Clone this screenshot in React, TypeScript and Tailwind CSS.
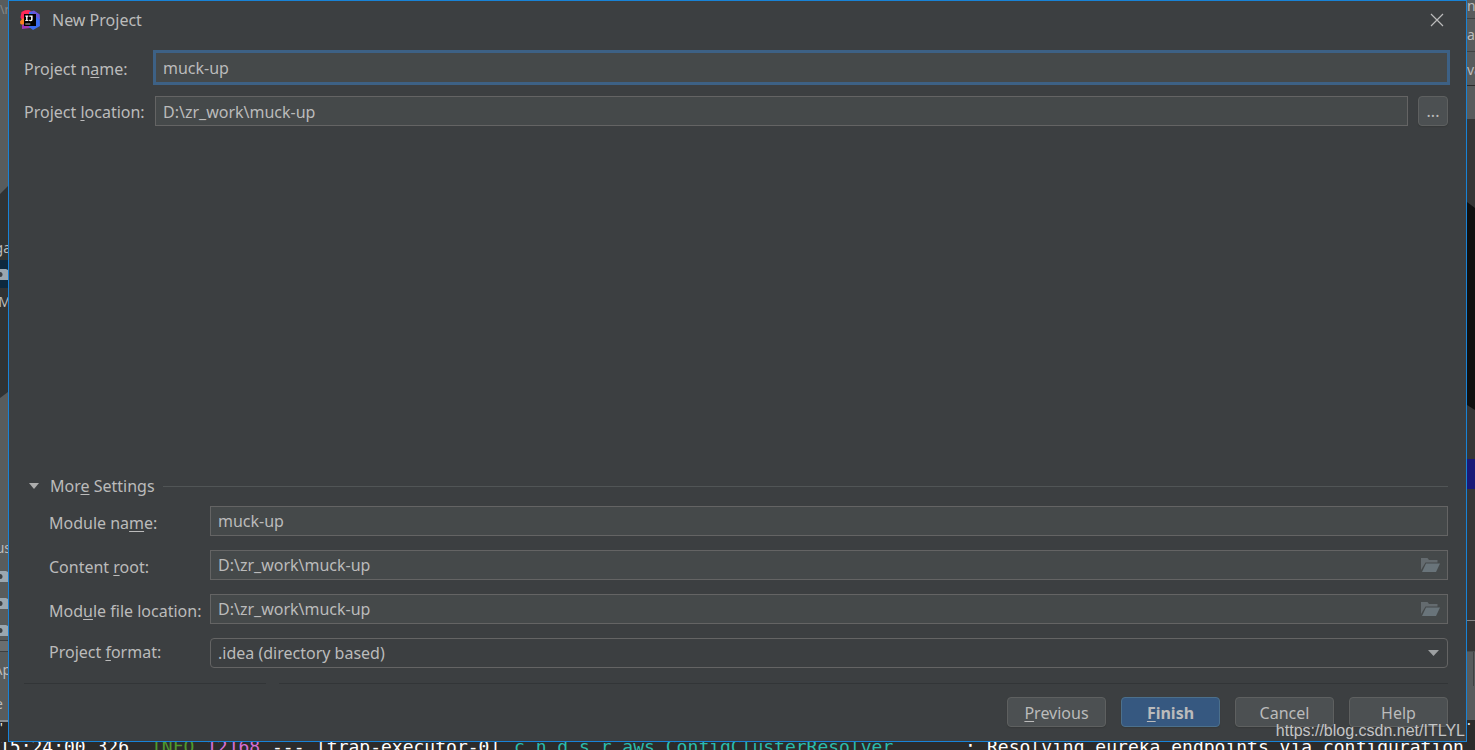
import { useState } from "react";
import type { ReactNode } from "react";

const fieldClass =
  "h-[30px] w-full min-w-0 border border-[#646464] bg-[#45494a] px-[7px] text-[#bbbbbb] outline-none";

const buttonClass =
  "h-[30px] w-[99px] rounded-[4px] border border-[#5e6060] bg-[#4c5052] pt-px shadow-[0_1px_1px_#36393a]";

function Mnemonic({ children }: { children: ReactNode }) {
  return <span className="underline decoration-1 underline-offset-2">{children}</span>;
}

function IdeaLogo() {
  return (
    <svg className="size-5 shrink-0" viewBox="0 0 20 20" aria-hidden="true">
      <path d="M1.500 2 5 .3 9 0l3 2-5 6-5 2-1.500-2.500z" fill="#fe2857" />
      <path d="M0 11.500 3 8l4 5-4 2-2.600-1z" fill="#fc801d" />
      <path d="M2 15l4-2 8 4-4 1-8 1z" fill="#a135b5" />
      <path d="M9 2l5-1 5.500 3.500L20 16l-7 4-4-3z" fill="#3a6cf0" />
      <path d="M11 1.500l3-1 5.500 4 .3 5L15 6z" fill="#6a55d6" />
      <path d="M4 4h12v12H4z" fill="#000" />
      <path
        d="M5.300 5.500h3v1.200h-.8v3.200h.8v1.200h-3V9.900h.8V6.700h-.8zM9.300 5.500h3.300v3.700c0 1.300-.7 2-1.900 2-.8 0-1.400-.3-1.800-.8l.9-.9c.2.300.4.400.7.400.4 0 .6-.2.600-.8V6.700H9.300z"
        fill="#fff"
      />
      <path d="M5.300 13.500h5v1h-5z" fill="#bbb" />
    </svg>
  );
}

function OpenFolder() {
  return (
    <svg className="h-[14px] w-[19px]" viewBox="0 0 19 14" aria-hidden="true">
      <path d="M0 13V0h6.500l1.500 2h8.500v2.500H4.500L0 12z" fill="#646b6f" />
      <path d="M5 5.500h14L15 14H1z" fill="#69747a" />
    </svg>
  );
}

function TreeFolder() {
  return (
    <svg className="block h-[11px] w-2 shrink-0" viewBox="0 0 8 11" aria-hidden="true">
      <path d="M0 0h6l2 1v10H0z" fill="#9aa7b0" />
      <circle cx="0" cy="5.500" r="2.500" fill="#3c4145" />
    </svg>
  );
}

function Clip({ className, children }: { className: string; children: ReactNode }) {
  return (
    <div className={`flex items-center justify-end overflow-hidden text-sm ${className}`}>
      <span className="-mr-[3px]">{children}</span>
    </div>
  );
}

function LeftStrip() {
  return (
    <div className="flex w-2 shrink-0 flex-col overflow-hidden bg-[#585c5d] text-base leading-5 text-[#bbbbbb]">
      <div className="h-[22px] text-xs leading-5 text-[#888]">\r</div>
      <div className="h-[164px]" />
      <svg className="h-2 w-2" viewBox="0 0 8 8" aria-hidden="true">
        <path d="M8 0v8H0z" fill="#303334" />
      </svg>
      <div className="h-[42px] bg-[#303334]" />
      <Clip className="h-[24px] bg-[#303334]">ga</Clip>
      <div className="flex h-[28px] items-center bg-[#0d293e]">
        <TreeFolder />
      </div>
      <Clip className="h-[28px] bg-[#303334]">M</Clip>
      <div className="h-[76px] bg-[#303334]" />
      <svg className="h-[6px] w-2" viewBox="0 0 8 6" aria-hidden="true">
        <path d="M0 0h8L0 6z" fill="#303334" />
      </svg>
      <div className="flex-1" />
      <Clip className="h-[24px]">us</Clip>
      <div className="flex h-[80px] flex-col gap-4 pt-[11px]">
        <TreeFolder />
        <TreeFolder />
        <TreeFolder />
      </div>
      <div className="h-[12px] border-y border-[#3c3f41] bg-[#6a6e70]" />
      <Clip className="h-[36px]">Ap</Clip>
      <div className="h-[32px] text-sm leading-8">
        <span className="-ml-[5px]">e</span>
      </div>
      <div className="h-[2px] bg-[#8a8f93]" />
      <div className="h-5 bg-[#2b2b2b] text-xs leading-3 text-white">'</div>
    </div>
  );
}

function RightStrip() {
  return (
    <div className="flex w-2 shrink-0 flex-col overflow-hidden bg-[#363636] text-sm leading-5 text-[#bbbbbb]">
      <div className="h-[19px] overflow-hidden border-b border-[#3f4243] bg-[#585c5d] leading-3">n</div>
      <div className="h-[33px] border-b border-[#3f4243] bg-[#585c5d] pt-[6px]">ap</div>
      <div className="h-[34px] border-b border-[#2b2b2b] bg-[#585c5d] pt-2">va</div>
      <div className="h-[33px] bg-[#585c5d]" />
      <div className="h-[83px]" />
      <svg className="h-[208px] w-2" viewBox="0 0 8 208" aria-hidden="true">
        <path d="M0 0l8 6v202l-8-5z" fill="#101010" />
      </svg>
      <div className="flex-1" />
      <div className="h-[30px] bg-[#1a1a78]" />
      <div className="h-[132px] border-b border-[#858585]" />
      <div className="h-[30px]" />
      <div className="flex h-[69px] justify-end border-t border-[#4a4d4e] bg-[#585c5d] pr-px">
        <div className="h-[34px] w-px bg-[#3f4243]" />
      </div>
      <div className="h-[22px] bg-[#2b2b2b] leading-0 text-white">.</div>
    </div>
  );
}

function Console() {
  return (
    <div className="h-2 shrink-0 overflow-hidden bg-[#2b2b2b] font-['DejaVu_Sans_Mono',monospace] text-[18px] leading-none whitespace-pre text-white">
      <div className="-mt-1 -ml-px flex">
        <span className="w-[152px] shrink-0">15:24:00.326</span>
        <span className="w-[55px] shrink-0 text-[#4e9a2e]">INFO</span>
        <span className="w-[66px] shrink-0 text-[#d670d6]">12168</span>
        <span className="w-[44px] shrink-0">---</span>
        <span className="w-[198px] shrink-0">[trap-executor-0]</span>
        <span className="w-[451px] shrink-0 text-[#2bbbad]">c.n.d.s.r.aws.ConfigClusterResolver</span>
        <span className="w-[22px] shrink-0">:</span>
        <span>Resolving eureka endpoints via configuration</span>
      </div>
    </div>
  );
}

function SettingRow({ id, label, children }: { id: string; label: ReactNode; children: ReactNode }) {
  return (
    <div className="flex items-center">
      <label htmlFor={id} className="w-[161px] shrink-0 pt-1 whitespace-nowrap">
        {label}
      </label>
      <div className="relative min-w-0 flex-1">{children}</div>
    </div>
  );
}

export default function App() {
  const [open, setOpen] = useState(true);
  const [name, setName] = useState("muck-up");
  const [location, setLocation] = useState("D:\\zr_work\\muck-up");

  return (
    <div className="relative flex min-h-screen flex-col overflow-hidden bg-[#2b2b2b] font-['Noto_Sans',sans-serif] text-base leading-6 text-[#bbbbbb]">
      <div className="flex flex-1">
        <LeftStrip />
        <main className="flex min-w-0 flex-1 flex-col border border-[#1883d7] bg-[#3c3f41] pr-[18px] pl-[15px]">
          <header className="-ml-1 flex h-[37px] items-center gap-3">
            <IdeaLogo />
            <h1 className="flex-1">New Project</h1>
            <button type="button" aria-label="Close" className="mr-1">
              <svg className="size-[14px]" viewBox="0 0 14 14" aria-hidden="true">
                <path d="M1 1l12 12M13 1L1 13" stroke="#bbbbbb" strokeWidth="1.200" />
              </svg>
            </button>
          </header>

          <div className="mt-[14px] flex items-center">
            <label htmlFor="project-name" className="w-[131px] shrink-0 pt-0.5 whitespace-nowrap">
              Project n<Mnemonic>a</Mnemonic>me:
            </label>
            <input
              id="project-name"
              className="h-[31px] min-w-0 flex-1 border border-[#3d6185] bg-[#45494a] px-[7px] pt-px text-[#bbbbbb] ring-2 ring-[#3d6185] outline-none"
              value={name}
              onChange={(e) => setName(e.target.value)}
            />
          </div>
          <div className="mt-[13px] flex items-center">
            <label htmlFor="project-location" className="w-[131px] shrink-0 pt-0.5 whitespace-nowrap">
              Project <Mnemonic>l</Mnemonic>ocation:
            </label>
            <input
              id="project-location"
              className={`${fieldClass} pt-0.5`}
              value={location}
              onChange={(e) => setLocation(e.target.value)}
            />
            <button
              type="button"
              aria-label="Browse"
              className="ml-[10px] size-[30px] shrink-0 rounded-[4px] border border-[#5e6060] bg-[#4c5052] shadow-[0_1px_1px_#36393a]"
            >
              ...
            </button>
          </div>

          <div className="flex-1" />

          <section>
            <div className="flex items-center gap-2 pl-[5px]">
              <button type="button" className="flex items-center gap-[11px]" aria-expanded={open} onClick={() => setOpen(!open)}>
                <svg className="h-[6px] w-[10px]" viewBox="0 0 10 6" aria-hidden="true">
                  <path d="M0 0h10L5 6z" fill="#adadad" />
                </svg>
                <span>
                  Mor<Mnemonic>e</Mnemonic> Settings
                </span>
              </button>
              <div className="h-px flex-1 bg-[#515556]" />
            </div>
            {open && (
              <div className="mt-2 flex flex-col gap-[14px] pl-[25px]">
                <SettingRow id="module-name" label={<>Module na<Mnemonic>m</Mnemonic>e:</>}>
                  <input id="module-name" className={`${fieldClass} block`} defaultValue="muck-up" />
                </SettingRow>
                <SettingRow id="content-root" label={<>Content <Mnemonic>r</Mnemonic>oot:</>}>
                  <input id="content-root" className={`${fieldClass} block`} defaultValue={"D:\\zr_work\\muck-up"} />
                  <button type="button" aria-label="Browse content root" className="absolute top-2 right-2">
                    <OpenFolder />
                  </button>
                </SettingRow>
                <SettingRow id="module-file" label={<>Mod<Mnemonic>u</Mnemonic>le file location:</>}>
                  <input id="module-file" className={`${fieldClass} block`} defaultValue={"D:\\zr_work\\muck-up"} />
                  <button type="button" aria-label="Browse module file location" className="absolute top-2 right-2">
                    <OpenFolder />
                  </button>
                </SettingRow>
                <div className="flex items-center">
                  <label htmlFor="project-format" className="w-[161px] shrink-0 pb-0.5 whitespace-nowrap">
                    Project <Mnemonic>f</Mnemonic>ormat:
                  </label>
                  <div className="relative min-w-0 flex-1">
                    <select
                      id="project-format"
                      className="block h-[30px] w-full appearance-none rounded-[4px] border border-[#646464] bg-[#3c3f41] px-[7px] text-[#bbbbbb] outline-none"
                    >
                      <option>.idea (directory based)</option>
                    </select>
                    <svg className="pointer-events-none absolute top-3 right-[9px] h-[6px] w-[11px]" viewBox="0 0 11 6" aria-hidden="true">
                      <path d="M0 0h11L5.500 6z" fill="#9da0a2" />
                    </svg>
                  </div>
                </div>
              </div>
            )}
          </section>

          <div className="mt-[15px] flex gap-[13px]">
            <div className="h-px w-[242px] bg-[#323537]" />
            <div className="h-px flex-1 bg-[#323537]" />
          </div>
          <footer className="mt-[13px] mb-[14px] flex justify-end gap-[15px]">
            <button type="button" className={buttonClass}>
              <Mnemonic>P</Mnemonic>revious
            </button>
            <button
              type="button"
              className="h-[30px] w-[99px] rounded-[4px] border border-[#4c708c] bg-[#365880] pt-px font-bold shadow-[0_1px_1px_#36393a]"
            >
              <Mnemonic>F</Mnemonic>inish
            </button>
            <button type="button" className={buttonClass}>
              Cancel
            </button>
            <button type="button" className={buttonClass}>
              Help
            </button>
          </footer>
        </main>
        <RightStrip />
      </div>
      <Console />
      <div className="pointer-events-none absolute right-[10px] bottom-[7px] font-['Liberation_Sans',sans-serif] text-base text-[#c4c5c6]">
        https://blog.csdn.net/ITLYL
      </div>
    </div>
  );
}
